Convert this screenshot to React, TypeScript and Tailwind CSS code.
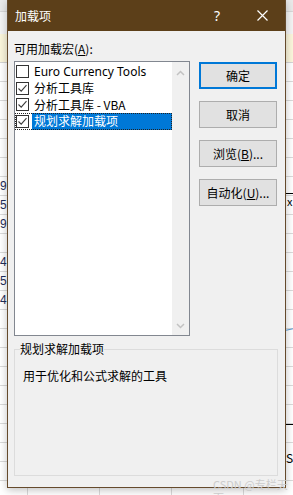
const cjk = { fontFamily: '"Noto Sans CJK SC", "Noto Sans", sans-serif' };

type Item = { label: string; checked: boolean; selected?: boolean };

const items: Item[] = [
  { label: "Euro Currency Tools", checked: false },
  { label: "分析工具库", checked: true },
  { label: "分析工具库 - VBA", checked: true },
  { label: "规划求解加载项", checked: true, selected: true },
];

// last digits of the numbers peeking out from under the dialog
const peek: Record<number, string> = { 6: "9", 7: "5", 8: "9", 10: "4", 11: "5", 12: "4" };

function CheckBox({ checked }: { checked: boolean }) {
  return (
    <span className="grid size-[13px] shrink-0 place-items-center border border-[#333333] bg-white">
      {checked ? (
        <svg width="11" height="11" viewBox="0 0 11 11" fill="none">
          <path d="M1.5 5.5 L4.2 8.2 L9.5 2.2" stroke="#3c3c3c" strokeWidth="1.1" />
        </svg>
      ) : null}
    </span>
  );
}

function Chevron({ up }: { up?: boolean }) {
  return (
    <svg width="9" height="6" viewBox="0 0 9 6" fill="none">
      <path d={up ? "M1 5 L4.5 1.5 L8 5" : "M1 1 L4.5 4.5 L8 1"} stroke="#c2c2c2" strokeWidth="1.5" />
    </svg>
  );
}

function DialogButton({ children, primary }: { children: React.ReactNode; primary?: boolean }) {
  return (
    <button
      className={
        "grid h-[27px] w-[78px] place-items-center bg-[#e1e1e1] text-[12px] leading-none text-black " +
        (primary ? "border-2 border-[#0078d7]" : "border border-[#adadad]")
      }
      style={cjk}
    >
      <span>{children}</span>
    </button>
  );
}

function Sheet() {
  const rows = Array.from({ length: 27 });
  return (
    <div className="flex h-[495px] w-[293px] flex-col overflow-hidden bg-white">
      <div className="h-[12px] shrink-0 border-b border-[#d8d8d8] bg-[#e9e9e9]" />
      <div className="h-[22px] shrink-0 bg-[#f4f4f4]" />
      <div className="h-[29px] shrink-0 border-b border-[#d4d4d4] bg-[#fbf6dc]" />
      <div className="flex flex-1 flex-col">
        {rows.map((_, i) => (
          <div key={i} className="flex h-[19px] shrink-0 border-b border-[#dadada]">
            <div
              className="w-[7px] shrink-0 whitespace-nowrap text-[12px] leading-[18px] text-[#1f2f5a]"
              style={{ fontFamily: '"Liberation Sans", sans-serif' }}
            >
              {peek[i] ?? ""}
            </div>
            <div className="w-[21px] shrink-0 border-r border-[#dadada]" />
            <div className="w-[72px] shrink-0 border-r border-[#dadada]" />
            <div className="w-[72px] shrink-0 border-r border-[#dadada]" />
            <div className="w-[72px] shrink-0 border-r border-[#dadada]" />
            <div className="flex-1" />
          </div>
        ))}
      </div>
    </div>
  );
}

export default function App() {
  return (
    <div className="relative h-[495px] w-[293px] overflow-hidden" style={cjk}>
      <Sheet />

      {/* chart bits to the right of the dialog */}
      <div className="absolute left-[286px] top-[193px] h-px w-[7px] bg-black" />
      <div className="absolute left-[287px] top-[196px] text-[11px] leading-none text-black">x</div>
      <div className="absolute left-[286px] top-[329px] h-px w-[7px] -rotate-12 bg-[#5b9bd5]" />
      <div className="absolute left-[286px] top-[424px] h-px w-[7px] bg-black" />
      <div className="absolute left-[286px] top-[452px] text-[12px] leading-none text-black">S</div>

      {/* dialog */}
      <div className="absolute left-[7px] top-0 flex h-[488px] w-[279px] flex-col border-x border-b border-[#654a2c] bg-[#f0f0f0] shadow-[0_2px_8px_rgba(0,0,0,0.25)]">
        <div className="flex h-[31px] shrink-0 items-center bg-[#5c3f19] pl-[7px] text-[12px] text-white">
          <span className="flex-1">加载项</span>
          <span className="mr-[37px] text-[14px]" style={{ fontFamily: '"Noto Sans", sans-serif' }}>?</span>
          <svg className="mr-[17px]" width="11" height="11" viewBox="0 0 11 11" fill="none">
            <path d="M0.5 0.5 L10.5 10.5 M10.5 0.5 L0.5 10.5" stroke="#ffffff" strokeWidth="1.2" />
          </svg>
        </div>

        <div className="flex flex-1 flex-col pl-[6px] pr-[7px] pt-[10px]">
          <p className="h-[16px] text-[12px] leading-[16px] text-black">
            可用加载宏(<span className="underline">A</span>):
          </p>

          <div className="mt-[4px] flex gap-[9px]">
            <div className="flex h-[275px] w-[176px] border border-[#828790] bg-white">
              <div className="flex flex-1 flex-col pt-[1.5px]">
                {items.map((item) => (
                  <div
                    key={item.label}
                    className={
                      "flex h-[16.5px] items-center gap-[3px] pl-[1px] " +
                      (item.selected ? "outline-1 -outline-offset-1 outline-dotted outline-[#222]" : "")
                    }
                  >
                    <CheckBox checked={item.checked} />
                    <span
                      className={
                        "flex h-full flex-1 items-center pl-[2px] text-[12px] leading-none whitespace-nowrap " +
                        (item.selected ? "bg-[#0078d7] text-white" : "text-black")
                      }
                      style={item.label.startsWith("Euro") ? { fontFamily: '"Noto Sans", sans-serif' } : cjk}
                    >
                      {item.label}
                    </span>
                  </div>
                ))}
              </div>
              <div className="flex w-[17px] shrink-0 flex-col items-center justify-between bg-[#f0f0f0] pb-[6px] pt-[8px]">
                <Chevron up />
                <Chevron />
              </div>
            </div>

            <div className="flex flex-col gap-[12px] pt-px">
              <DialogButton primary>确定</DialogButton>
              <DialogButton>取消</DialogButton>
              <DialogButton>
                浏览(<span className="underline">B</span>)...
              </DialogButton>
              <DialogButton>
                自动化(<span className="underline">U</span>)...
              </DialogButton>
            </div>
          </div>

          <fieldset className="mt-[5px] h-[135px] border border-[#dcdcdc] pl-[5px]">
            <legend className="h-[16px] text-[12px] leading-[16px] text-black">规划求解加载项</legend>
            <p className="mt-[11px] pl-[3px] text-[12px] leading-[16px] text-black">用于优化和公式求解的工具</p>
          </fieldset>
        </div>
      </div>

      <div className="absolute left-[213px] top-[478px] text-[11px] leading-[13px] text-[#cccccc]">CSDN @专栏天下</div>
    </div>
  );
}
